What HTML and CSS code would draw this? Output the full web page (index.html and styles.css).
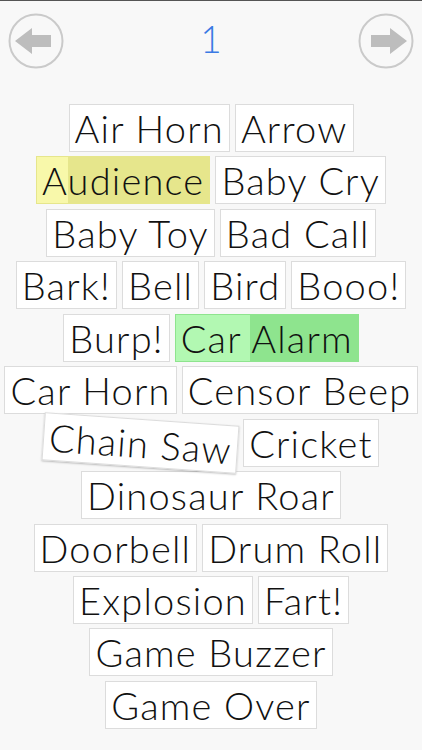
FILE: index.html
```html
<!DOCTYPE html>
<html lang="en">
<head>
    <meta charset="UTF-8">
    <meta name="viewport" content="width=device-width, initial-scale=1.0">
    <title>Sound Board</title>
    <link rel="stylesheet" href="styles.css">
</head>
<body>
    <header class="topbar">
        <button class="nav-btn" aria-label="Previous page">
            <svg width="56" height="56" viewBox="0 0 56 56">
                <circle cx="28" cy="28" r="26.5" fill="none" stroke="#cacaca" stroke-width="2"/>
                <path d="M7 28 L24 15 L24 22 L43 22 L43 34 L24 34 L24 41 Z" fill="#bdbdbd"/>
            </svg>
        </button>
        <span class="page-num">1</span>
        <button class="nav-btn" aria-label="Next page">
            <svg width="56" height="56" viewBox="0 0 56 56">
                <circle cx="28" cy="28" r="26.5" fill="none" stroke="#cacaca" stroke-width="2"/>
                <path d="M49 28 L32 15 L32 22 L13 22 L13 34 L32 34 L32 41 Z" fill="#bdbdbd"/>
            </svg>
        </button>
    </header>

    <main class="sounds">
        <div class="row">
            <span class="sound">Air Horn</span>
            <span class="sound">Arrow</span>
        </div>
        <div class="row">
            <span class="sound playing-yellow" style="--progress: 18%">Audience</span>
            <span class="sound">Baby Cry</span>
        </div>
        <div class="row">
            <span class="sound">Baby Toy</span>
            <span class="sound">Bad Call</span>
        </div>
        <div class="row">
            <span class="sound">Bark!</span>
            <span class="sound">Bell</span>
            <span class="sound">Bird</span>
            <span class="sound">Booo!</span>
        </div>
        <div class="row">
            <span class="sound">Burp!</span>
            <span class="sound playing-green" style="--progress: 40.5%">Car Alarm</span>
        </div>
        <div class="row">
            <span class="sound">Car Horn</span>
            <span class="sound">Censor Beep</span>
        </div>
        <div class="row">
            <span class="sound tilted">Chain Saw</span>
            <span class="sound">Cricket</span>
        </div>
        <div class="row">
            <span class="sound">Dinosaur Roar</span>
        </div>
        <div class="row">
            <span class="sound">Doorbell</span>
            <span class="sound">Drum Roll</span>
        </div>
        <div class="row">
            <span class="sound">Explosion</span>
            <span class="sound">Fart!</span>
        </div>
        <div class="row">
            <span class="sound">Game Buzzer</span>
        </div>
        <div class="row">
            <span class="sound">Game Over</span>
        </div>
    </main>
</body>
</html>
```

FILE: styles.css
```css
body {
    margin: 0;
    background: #f8f8f8;
    border-top: 1px solid #555;
    font-family: Lato, "Noto Sans", sans-serif;
    overflow: hidden;
}

.topbar {
    display: flex;
    justify-content: space-between;
    align-items: center;
    padding: 11px 8px 0;
    height: 58px;
}

.nav-btn {
    border: none;
    background: none;
    padding: 0;
    width: 56px;
    height: 56px;
    cursor: pointer;
}
.nav-btn svg {
    display: block;
}

.page-num {
    font-size: 37px;
    color: #3a7ae4;
    font-weight: 300;
    margin-top: -6px;
}

.sounds {
    display: flex;
    flex-direction: column;
    gap: 4.45px;
    padding: 0 2px;
    margin-top: 34px;
}

.row {
    display: flex;
    justify-content: center;
    gap: 5px;
}

.sound {
    display: inline-block;
    background: #fff;
    border: 1px solid #dcdcdc;
    padding: 0 5px;
    height: 46px;
    line-height: 46px;
    font-size: 38px;
    font-weight: 300;
    letter-spacing: 1.2px;
    color: #111;
    white-space: nowrap;
}

.playing-yellow {
    background: linear-gradient(to right, #f8f8aa var(--progress), #e6e68c var(--progress));
    border-color: #e6e68c;
}
.playing-green {
    background: linear-gradient(to right, #b2f8b2 var(--progress), #8ee48e var(--progress));
    border-color: #8ee48e;
}

.tilted {
    transform: rotate(4deg);
    box-shadow: 0 1px 2px rgba(0, 0, 0, 0.25);
}
```
